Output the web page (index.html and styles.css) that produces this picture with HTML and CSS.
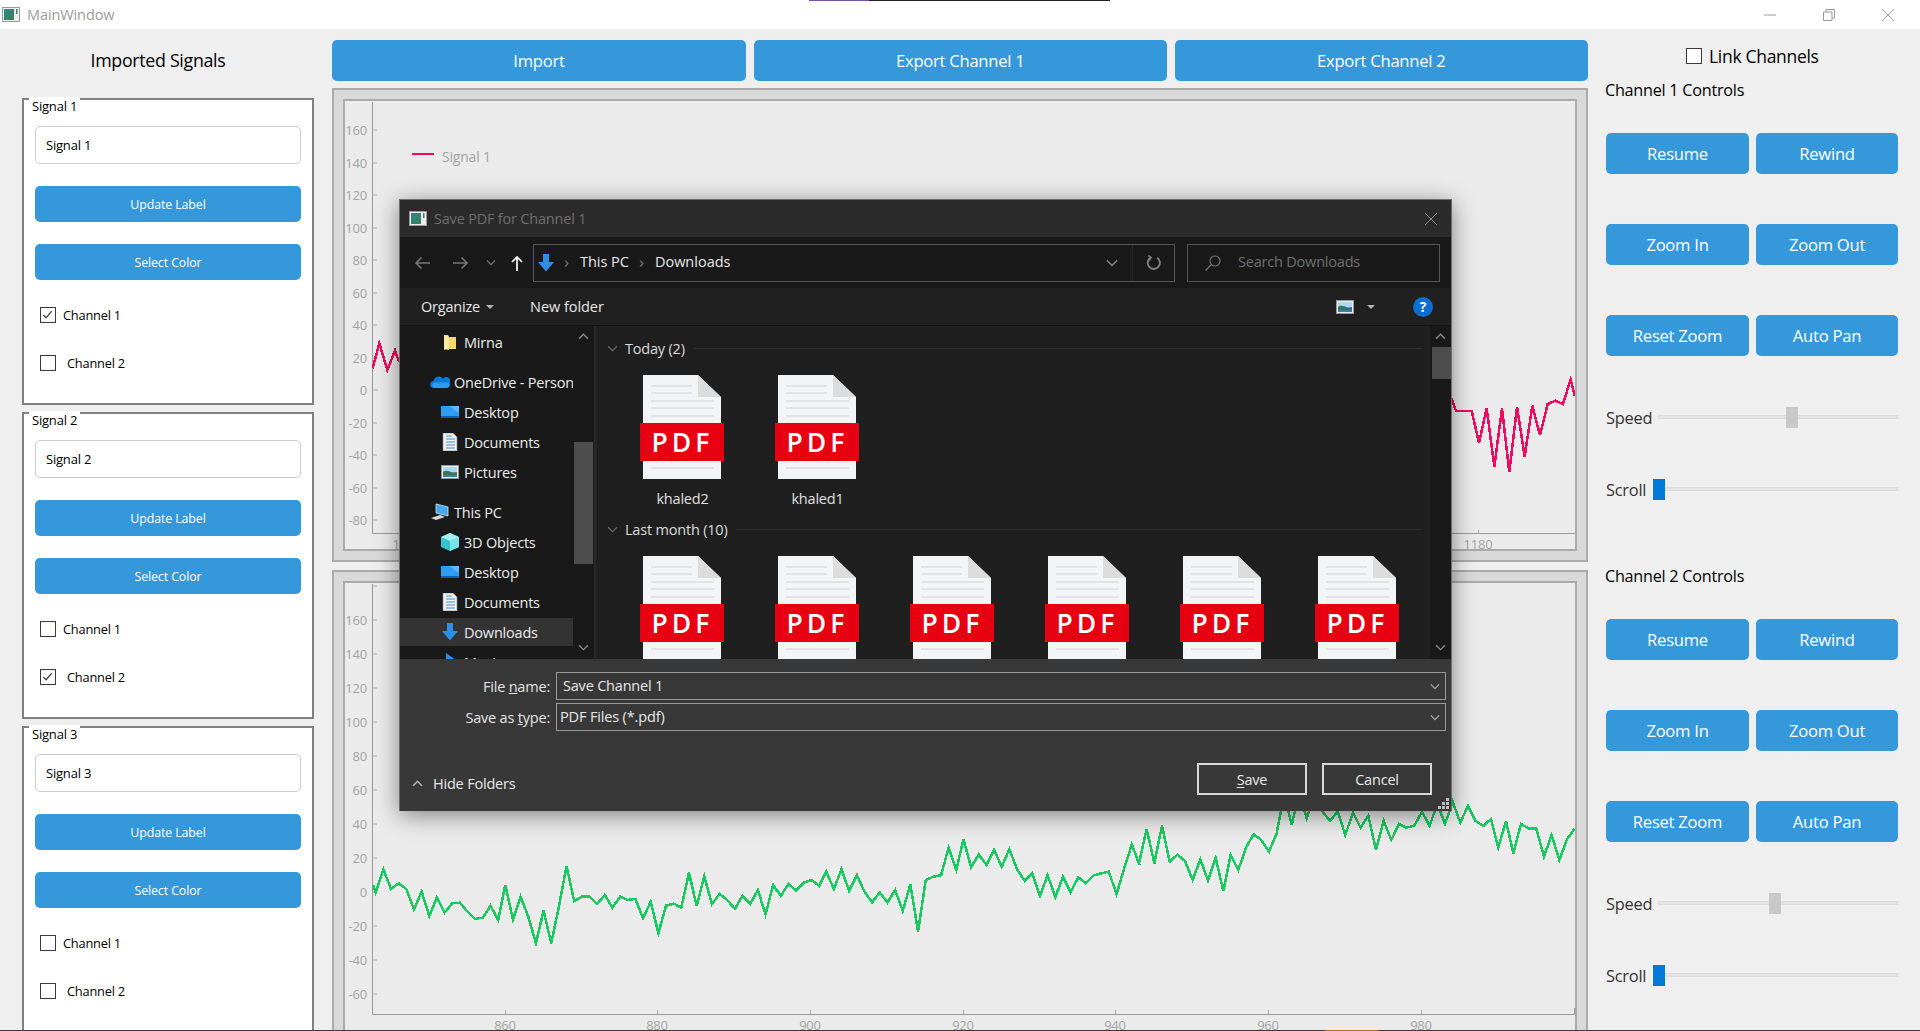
FILE: index.html
```html
<!DOCTYPE html>
<html lang="en">
<head>
<meta charset="utf-8">
<title>MainWindow</title>
<link rel="stylesheet" href="styles.css">
</head>
<body>
<svg class="defs" width="0" height="0" aria-hidden="true">
  <defs>
    <linearGradient id="appicon" x1="0" y1="0" x2="1" y2="1"><stop offset="0" stop-color="#2a8a96"/><stop offset="1" stop-color="#3f7f52"/></linearGradient>
    <symbol id="i-app" viewBox="0 0 18 15"><rect x=".5" y=".5" width="17" height="14" fill="#eee" stroke="#9a9a9a"/><rect x="2" y="2" width="10" height="11" fill="url(#appicon)"/><rect x="14" y="2" width="1.5" height="5" fill="#4a7a66"/></symbol>
    <symbol id="i-folder" viewBox="0 0 18 18"><path d="M3 2h4l1 2h7v12H5l-2 1z" fill="#f7d774"/><path d="M3 2l5 2v13l-5-1z" fill="#fbe9a6"/></symbol>
    <symbol id="i-cloud" viewBox="0 0 20 14"><path d="M4 13a3.500 3.500 0 0 1-.5-7A5.500 5.500 0 0 1 13 3.500 4 4 0 0 1 19.500 9 3.500 3.500 0 0 1 17 13z" fill="#0a78d4"/><path d="M4 13a3 3 0 0 1 0-5.500h11.500A3 3 0 0 1 19.800 10 3.500 3.500 0 0 1 17 13z" fill="#2f9bf0"/></symbol>
    <symbol id="i-desk" viewBox="0 0 18 14"><rect y="1" width="18" height="12" fill="#2f9df4"/><path d="M0 13V11h18v2z" fill="#0b62b8"/><path d="M8 1h10v7z" fill="#61b9fa"/></symbol>
    <symbol id="i-docs" viewBox="0 0 18 18"><path d="M2 0h10l4 4v14H2z" fill="#f2f2f2" stroke="#888" stroke-width=".7"/><path d="M5 3h6M5 6h9M5 9h9M5 12h9M5 15h9" stroke="#3d8edb" stroke-width="1.200"/></symbol>
    <symbol id="i-pics" viewBox="0 0 18 14"><rect x=".5" y=".5" width="17" height="13" fill="#eee" stroke="#999"/><rect x="2" y="2" width="14" height="10" fill="#a9dcf2"/><path d="M2 7c3-2 5-1 8 0s4 0 6 0v3H2z" fill="#41705c"/><rect x="2" y="10" width="14" height="2" fill="#2f84a8"/></symbol>
    <symbol id="i-pc" viewBox="0 0 20 18"><path d="M6 1l12 3v9L6 10z" fill="#47a8ee" stroke="#cfe6f8" stroke-width=".8"/><path d="M1 15l9-3 5 2-9 3z" fill="#d9d9d9"/></symbol>
    <symbol id="i-cube" viewBox="0 0 18 18"><path d="M9 0l9 4v10l-9 4-9-4V4z" fill="#37c3cf"/><path d="M9 8l9-4v10l-9 4z" fill="#79e3ea"/><path d="M9 8L0 4l9-4 9 4z" fill="#a6f0f3"/></symbol>
    <symbol id="i-dl" viewBox="0 0 16 18"><path d="M5 0h6v8h5l-8 9.500L0 8h5z" fill="#2f8fe8"/></symbol>
    <symbol id="i-music" viewBox="0 0 18 18"><path d="M5 0l10 7-10 7z" fill="#2f8fe8"/></symbol>
    <symbol id="i-chev" viewBox="0 0 12 8"><path d="M1 1.500l5 5 5-5" fill="none" stroke="currentColor" stroke-width="1.500"/></symbol>
    <symbol id="i-chevup" viewBox="0 0 12 8"><path d="M1 6.500l5-5 5 5" fill="none" stroke="currentColor" stroke-width="1.700"/></symbol>
    <symbol id="i-page" viewBox="0 0 84 104"><path d="M3 0h55l23 22v82H3z" fill="#f3f4f6"/><path d="M58 0l23 22H58z" fill="#dcdcdc"/><path d="M11 11h41M11 18h41M11 26h63M11 33h63M11 41h63M11 93h63" stroke="#cfd2d6" stroke-width="1"/></symbol>
  </defs>
</svg>

<div class="window">
  <div class="topline"></div>
  <header class="titlebar">
    <svg class="tb-icon"><use href="#i-app"/></svg>
    <span class="tb-title">MainWindow</span>
    <div class="tb-controls">
      <svg class="tb-btn" viewBox="0 0 12 12"><path d="M0 6h12" stroke="#999"/></svg>
      <svg class="tb-btn" viewBox="0 0 12 12"><path d="M.5 3h8.500v8.500H.5zM3 3V.5h8.500V9H9" fill="none" stroke="#999"/></svg>
      <svg class="tb-btn" viewBox="0 0 12 12"><path d="M0 0l12 12M12 0L0 12" stroke="#999"/></svg>
    </div>
  </header>

  <main class="main">
    <aside class="left">
      <h1 class="left-title">Imported Signals</h1>

      <section class="group">
        <span class="legend">Signal 1</span>
        <div class="field">Signal 1</div>
        <div class="btn btn-s">Update Label</div>
        <div class="btn btn-s">Select Color</div>
        <label class="chk chk-a"><span class="box on"><svg viewBox="0 0 14 14"><path d="M2.500 7.500l3 3 6-7" fill="none" stroke="#444" stroke-width="1.300"/></svg></span>Channel 1</label>
        <label class="chk chk-b"><span class="box"></span>Channel 2</label>
      </section>

      <section class="group">
        <span class="legend">Signal 2</span>
        <div class="field">Signal 2</div>
        <div class="btn btn-s">Update Label</div>
        <div class="btn btn-s">Select Color</div>
        <label class="chk chk-a"><span class="box"></span>Channel 1</label>
        <label class="chk chk-b"><span class="box on"><svg viewBox="0 0 14 14"><path d="M2.500 7.500l3 3 6-7" fill="none" stroke="#444" stroke-width="1.300"/></svg></span>Channel 2</label>
      </section>

      <section class="group">
        <span class="legend">Signal 3</span>
        <div class="field">Signal 3</div>
        <div class="btn btn-s">Update Label</div>
        <div class="btn btn-s">Select Color</div>
        <label class="chk chk-a"><span class="box"></span>Channel 1</label>
        <label class="chk chk-b"><span class="box"></span>Channel 2</label>
      </section>
    </aside>

    <div class="center">
      <div class="top-btns">
        <div class="btn btn-m">Import</div>
        <div class="btn btn-m">Export Channel 1</div>
        <div class="btn btn-m">Export Channel 2</div>
      </div>

      <div class="plot-outer">
        <div class="plot">
          <svg class="plot-svg" viewBox="345 101 1230 448">
            <path class="axis" d="M372.500 102V533.500H1575"/>
            <path class="tick" d="M372 130h5M372 163h5M372 195h5M372 228h5M372 260h5M372 293h5M372 325h5M372 358h5M372 390h6M372 423h5M372 455h5M372 488h5M372 520h5M1478.500 530v3"/>
            <g class="ylab">
              <text x="367" y="130">160</text><text x="367" y="163">140</text><text x="367" y="195">120</text><text x="367" y="228">100</text><text x="367" y="260">80</text><text x="367" y="293">60</text><text x="367" y="325">40</text><text x="367" y="358">20</text><text x="367" y="390">0</text><text x="367" y="423">-20</text><text x="367" y="455">-40</text><text x="367" y="488">-60</text><text x="367" y="520">-80</text>
            </g>
            <g class="xlab"><text x="407" y="544">1040</text><text x="1478" y="544">1180</text></g>
            <path class="leg-line" d="M412 154h22"/>
            <text class="leg-text" x="442" y="156">Signal 1</text>
            <polyline class="trace pink" transform="translate(330 80) scale(.3333)" points="128,865 148,790 172,870 195,812 207,845"/>
            <polyline class="trace pink" transform="translate(1440 0) scale(.3333 .3381)" points="20,1150 37,1185 48,1215 95,1215 117,1310 140,1208 163,1380 186,1208 208,1397 231,1203 254,1350 277,1200 300,1287 323,1195 346,1185 369,1195 392,1122 404,1170"/>
          </svg>
        </div>
      </div>

      <div class="plot-outer">
        <div class="plot">
          <svg class="plot-svg" viewBox="345 583 1230 448">
            <path class="axis" d="M372.500 584V1014.500H1574.500V1008"/>
            <path class="tick" d="M372 586h5M372 620h5M372 654h5M372 688h5M372 722h5M372 756h5M372 790h5M372 824h5M372 858h5M372 892h6M372 926h5M372 960h5M372 994h5M505.500 1010v4M657.500 1010v4M810.500 1010v4M963.500 1010v4M1115.500 1010v4M1268.500 1010v4M1421.500 1010v4"/>
            <g class="ylab">
              <text x="367" y="620">160</text><text x="367" y="654">140</text><text x="367" y="688">120</text><text x="367" y="722">100</text><text x="367" y="756">80</text><text x="367" y="790">60</text><text x="367" y="824">40</text><text x="367" y="858">20</text><text x="367" y="892">0</text><text x="367" y="926">-20</text><text x="367" y="960">-40</text><text x="367" y="994">-60</text>
            </g>
            <g class="xlab"><text x="505" y="1025">860</text><text x="657" y="1025">880</text><text x="810" y="1025">900</text><text x="963" y="1025">920</text><text x="1115" y="1025">940</text><text x="1268" y="1025">960</text><text x="1421" y="1025">980</text></g>
            <polyline class="trace green" transform="translate(340 800) scale(.5102 .3333)" points="65,255 70,277 85,208 100,267 115,250 130,267 145,328 160,275 175,348 190,292 205,338 220,310 235,308 250,335 265,357 280,353 295,317 310,360 324,255 339,358 354,290 369,350 384,430 399,332 414,430 429,320 444,198 459,303 474,290 489,290 504,312 519,285 534,323 549,290 564,300 579,297 594,355 609,305 624,400 639,317 654,311 669,323 684,218 699,318 714,229 729,312 744,282 759,300 774,327 789,287 804,312 819,270 834,343 849,255 864,288 879,252 894,272 909,248 924,240 939,257 953,215 968,267 983,208 998,273 1013,225 1028,275 1043,307 1058,277 1073,308 1088,270 1103,333 1118,253 1133,395 1148,240 1163,230 1178,226 1193,143 1208,210 1222,118 1237,202 1252,163 1267,195 1282,150 1297,200 1312,148 1327,208 1342,242 1357,220 1372,288 1387,225 1402,292 1417,230 1432,277 1447,232 1462,250 1477,226 1492,220 1507,215 1522,283 1537,205 1552,133 1567,195"/>
            <polyline class="trace green" transform="translate(1140 760) scale(.3333)" points="-3,310 20,207 43,310 66,197 89,305 112,284 135,303 158,360 181,298 204,362 227,294 250,393 272,285 295,330 318,262 341,223 364,240 387,275 410,220 433,100 455,195 478,100 500,175 523,110 548,155 570,183 593,155 616,225 639,157 662,203 685,167 708,270 731,182 754,240 777,192 800,203 823,197 846,155 869,198 892,130 915,192 938,125 961,188 984,137 1007,183 1030,198 1053,177 1075,263 1098,183 1120,280 1143,192 1166,205 1189,206 1212,290 1235,225 1258,300 1281,238 1304,206"/>
          </svg>
        </div>
      </div>
    </div>

    <aside class="right">
      <label class="link-row"><span class="box box-d"></span>Link Channels</label>

      <section class="ctrl">
        <h2 class="ctrl-title">Channel 1 Controls</h2>
        <div class="ctrl-grid">
          <div class="btn btn-m">Resume</div><div class="btn btn-m">Rewind</div>
          <div class="btn btn-m">Zoom In</div><div class="btn btn-m">Zoom Out</div>
          <div class="btn btn-m">Reset Zoom</div><div class="btn btn-m">Auto Pan</div>
        </div>
        <div class="slider-row first">
          <span class="sl-label speed">Speed</span>
          <div class="track"><span class="handle" style="left:127px"></span></div>
        </div>
        <div class="slider-row">
          <span class="sl-label scroll">Scroll</span>
          <div class="track"><span class="handle active" style="left:-1px"></span></div>
        </div>
      </section>

      <section class="ctrl">
        <h2 class="ctrl-title">Channel 2 Controls</h2>
        <div class="ctrl-grid">
          <div class="btn btn-m">Resume</div><div class="btn btn-m">Rewind</div>
          <div class="btn btn-m">Zoom In</div><div class="btn btn-m">Zoom Out</div>
          <div class="btn btn-m">Reset Zoom</div><div class="btn btn-m">Auto Pan</div>
        </div>
        <div class="slider-row first">
          <span class="sl-label speed">Speed</span>
          <div class="track"><span class="handle" style="left:110px"></span></div>
        </div>
        <div class="slider-row">
          <span class="sl-label scroll">Scroll</span>
          <div class="track"><span class="handle active" style="left:-1px"></span></div>
        </div>
      </section>
    </aside>
  </main>

  <div class="taskline"><span class="taskline-on"></span></div>

  <div class="dialog">
    <div class="d-title">
      <svg class="d-appicon"><use href="#i-app"/></svg>
      <span class="d-title-text">Save PDF for Channel 1</span>
      <svg class="d-close" viewBox="0 0 12 12"><path d="M0 0l12 12M12 0L0 12" stroke="#8a8a8a"/></svg>
    </div>

    <div class="d-addr">
      <div class="d-nav">
        <svg class="nb nb-back" viewBox="0 0 16 14"><path d="M16 7H2M7.500 1.500L2 7l5.500 5.500" fill="none" stroke="#777" stroke-width="1.600"/></svg>
        <svg class="nb nb-fwd" viewBox="0 0 16 14"><path d="M0 7h14M8.500 1.500L14 7l-5.500 5.500" fill="none" stroke="#777" stroke-width="1.600"/></svg>
        <svg class="nb-ch"><use href="#i-chev"/></svg>
        <svg class="nb-up" viewBox="0 0 12 16"><path d="M6 16V2M1 7l5-5 5 5" fill="none" stroke="#fff" stroke-width="1.700"/></svg>
      </div>
      <div class="addrbox">
        <svg class="crumb-icon"><use href="#i-dl"/></svg>
        <span class="crumb-sep">&#8250;</span>
        <span class="crumb">This PC</span>
        <span class="crumb-sep">&#8250;</span>
        <span class="crumb">Downloads</span>
        <svg class="addr-ch"><use href="#i-chev"/></svg>
        <span class="addr-div"></span>
        <svg class="addr-ref" viewBox="0 0 16 16"><path d="M5 2.800A6.500 6.500 0 1 0 12 3" fill="none" stroke="#808080" stroke-width="2"/><path d="M2.500 0.500l3 2.300-2.300 3" fill="none" stroke="#808080" stroke-width="1.600"/></svg>
      </div>
      <div class="searchbox">
        <svg class="s-icon" viewBox="0 0 16 16"><circle cx="10" cy="6" r="5" fill="none" stroke="#777" stroke-width="1.100"/><path d="M6.500 9.500L.5 15.500" stroke="#777" stroke-width="1.100"/></svg>
        <span class="s-text">Search Downloads</span>
      </div>
    </div>

    <div class="d-tools">
      <span class="tool org">Organize</span><span class="caret"></span>
      <span class="tool newf">New folder</span>
      <svg class="view-ic"><use href="#i-pics"/></svg>
      <span class="caret caret-v"></span>
      <span class="help">?</span>
    </div>

    <div class="d-body">
      <nav class="d-navpane">
        <div class="navlist">
          <div class="nrow l2"><svg class="nic"><use href="#i-folder"/></svg>Mirna</div>
          <div class="nrow l1 gap"><svg class="nic"><use href="#i-cloud"/></svg>OneDrive - Person</div>
          <div class="nrow l2"><svg class="nic"><use href="#i-desk"/></svg>Desktop</div>
          <div class="nrow l2"><svg class="nic"><use href="#i-docs"/></svg>Documents</div>
          <div class="nrow l2"><svg class="nic"><use href="#i-pics"/></svg>Pictures</div>
          <div class="nrow l1 gap"><svg class="nic"><use href="#i-pc"/></svg>This PC</div>
          <div class="nrow l2"><svg class="nic"><use href="#i-cube"/></svg>3D Objects</div>
          <div class="nrow l2"><svg class="nic"><use href="#i-desk"/></svg>Desktop</div>
          <div class="nrow l2"><svg class="nic"><use href="#i-docs"/></svg>Documents</div>
          <div class="nrow l2 sel"><svg class="nic"><use href="#i-dl"/></svg>Downloads</div>
          <div class="nrow l2"><svg class="nic"><use href="#i-music"/></svg>Music</div>
        </div>
        <div class="vscroll">
          <svg class="sc-arrow up"><use href="#i-chevup"/></svg>
          <span class="thumb thumb-nav"></span>
          <svg class="sc-arrow down"><use href="#i-chev"/></svg>
        </div>
      </nav>

      <div class="d-files">
        <div class="sec-head"><svg class="sec-ch"><use href="#i-chev"/></svg><span class="sec-name">Today (2)</span><span class="sec-line"></span></div>
        <div class="tiles">
          <div class="tile"><div class="doc"><svg class="page"><use href="#i-page"/></svg><span class="band">PDF</span></div><span class="fname">khaled2</span></div>
          <div class="tile"><div class="doc"><svg class="page"><use href="#i-page"/></svg><span class="band">PDF</span></div><span class="fname">khaled1</span></div>
        </div>
        <div class="sec-head"><svg class="sec-ch"><use href="#i-chev"/></svg><span class="sec-name">Last month (10)</span><span class="sec-line"></span></div>
        <div class="tiles">
          <div class="tile"><div class="doc"><svg class="page"><use href="#i-page"/></svg><span class="band">PDF</span></div></div>
          <div class="tile"><div class="doc"><svg class="page"><use href="#i-page"/></svg><span class="band">PDF</span></div></div>
          <div class="tile"><div class="doc"><svg class="page"><use href="#i-page"/></svg><span class="band">PDF</span></div></div>
          <div class="tile"><div class="doc"><svg class="page"><use href="#i-page"/></svg><span class="band">PDF</span></div></div>
          <div class="tile"><div class="doc"><svg class="page"><use href="#i-page"/></svg><span class="band">PDF</span></div></div>
          <div class="tile"><div class="doc"><svg class="page"><use href="#i-page"/></svg><span class="band">PDF</span></div></div>
        </div>
      </div>

      <div class="vscroll vscroll-r">
        <svg class="sc-arrow up"><use href="#i-chevup"/></svg>
        <span class="thumb thumb-files"></span>
        <svg class="sc-arrow down"><use href="#i-chev"/></svg>
      </div>
    </div>

    <div class="d-foot">
      <div class="frow">
        <span class="flabel">File <u>n</u>ame:</span>
        <div class="finput pad-a">Save Channel 1<svg class="f-ch"><use href="#i-chev"/></svg></div>
      </div>
      <div class="frow frow-2">
        <span class="flabel">Save as <u>t</u>ype:</span>
        <div class="finput pad-b">PDF Files (*.pdf)<svg class="f-ch"><use href="#i-chev"/></svg></div>
      </div>
      <div class="fbtns">
        <div class="hide"><svg class="hide-ch"><use href="#i-chevup"/></svg>Hide Folders</div>
        <div class="dbtn dbtn-first"><u>S</u>ave</div>
        <div class="dbtn">Cancel</div>
      </div>
      <svg class="grip" viewBox="0 0 11 11"><path d="M8 0h3v3H8zM4 4h3v3H4zM8 4h3v3H8zM0 8h3v3H0zM4 8h3v3H4zM8 8h3v3H8z" fill="#bdbdbd"/></svg>
    </div>
  </div>
</div>
</body>
</html>
```
FILE: styles.css
```css
* { box-sizing: border-box; }
html, body { margin: 0; padding: 0; height: 100%; overflow: hidden; }
body { font-family: "Open Sans", "Noto Sans", sans-serif; color: #000; }
.defs { position: absolute; }

.window { position: relative; width: 1920px; height: 1031px; overflow: hidden; background: #efefef; display: flex; flex-direction: column; }
.topline { position: absolute; top: 0; left: 809px; width: 301px; height: 1px; background: linear-gradient(90deg, #7a4fa8 0 60px, #222 60px); }
.taskline { position: absolute; left: 0; right: 0; bottom: 0; height: 1px; background: #3a3a3a; }
.taskline-on { position: absolute; left: 1325px; width: 53px; height: 1px; background: #c8661a; }

/* title bar */
.titlebar { height: 29px; flex: none; background: #fff; display: flex; align-items: center; }
.tb-icon { width: 18px; height: 15px; margin-left: 2px; }
.tb-title { margin-left: 7px; font-size: 14.500px; letter-spacing: -.1px; color: #9c9c9c; }
.tb-controls { margin-left: auto; display: flex; gap: 47px; padding-right: 26px; }
.tb-btn { width: 12px; height: 12px; display: block; }

.main { flex: 1; display: flex; min-height: 0; }

/* left */
.left { width: 332px; flex: none; padding: 0 18px 0 22px; }
.left-title { margin: 20px 0 27px; height: 22px; line-height: 22px; font-size: 17.800px; font-weight: 400; letter-spacing: -.3px; text-align: center; width: 272px; }
.group { position: relative; height: 307px; margin-bottom: 7px; background: #fff; border: 2px solid #808080; padding: 26px 11px 0; display: flex; flex-direction: column; }
.legend { position: absolute; top: -3px; left: 5px; padding: 0 3px; height: 19px; line-height: 18px; background: #fff; font-size: 13px; letter-spacing: -.2px; }
.field { height: 38px; border: 1px solid #ccc; border-radius: 5px; line-height: 37px; padding-left: 10px; font-size: 13px; letter-spacing: -.2px; margin-bottom: 22px; background: #fff; }
.btn { display: flex; align-items: center; justify-content: center; background: #3498db; color: #fff; border-radius: 5px; }
.btn-s { height: 36px; margin-bottom: 22px; font-size: 12.400px; letter-spacing: -.1px; }
.btn-s + .btn-s { margin-bottom: 27px; }
.chk { display: flex; align-items: center; height: 16px; margin-left: 5px; font-size: 12.800px; letter-spacing: -.2px; }
.chk-a .box { margin-right: 7px; }
.chk-b { margin-top: 32px; }
.chk-b .box { margin-right: 11px; }
.box { width: 16px; height: 16px; flex: none; border: 1.500px solid #3a3a3a; background: #fff; display: block; }
.box svg { display: block; width: 13px; height: 13px; }

/* center */
.center { width: 1256px; flex: none; padding-top: 11px; }
.top-btns { display: grid; grid-template-columns: 414px 413.500px 413.500px; column-gap: 7.500px; height: 41px; margin-bottom: 7px; }
.btn-m { font-size: 16.600px; letter-spacing: -.25px; height: 41px; }
.plot-outer { height: 474px; margin-bottom: 8px; border: 2px solid #aaa; background: #d9d9d9; padding: 9px; }
.plot { height: 452px; border: 2px solid #aaa; background: #ebebeb; }
.plot-svg { display: block; width: 100%; height: 100%; }
.axis { fill: none; stroke: #9a9a9a; stroke-width: 1; }
.tick { fill: none; stroke: #a8a8a8; stroke-width: 1; }
.ylab text { text-anchor: end; dominant-baseline: central; font-size: 13px; fill: #a3a3a3; letter-spacing: -.2px; }
.xlab text { text-anchor: middle; dominant-baseline: central; font-size: 13px; fill: #a3a3a3; letter-spacing: -.2px; }
.leg-line { stroke: #ee0a5f; stroke-width: 2; }
.leg-text { font-size: 14px; fill: #a3a3a3; letter-spacing: -.2px; dominant-baseline: central; }
.trace { fill: none; stroke-width: 2.500; vector-effect: non-scaling-stroke; shape-rendering: crispEdges; }
.pink { stroke: #ee0a5f; }
.green { stroke: #19c85e; }

/* right */
.right { flex: 1; padding: 16px 22px 0 18px; min-width: 0; }
.link-row { height: 22px; display: flex; align-items: center; margin: 0 0 12px 80px; font-size: 17.500px; letter-spacing: -.3px; }
.box-d { margin-right: 7px; }
.ctrl { height: 486px; }
.ctrl-title { margin: 0 0 32px -1px; height: 22px; line-height: 22px; font-size: 16.200px; font-weight: 400; letter-spacing: -.25px; }
.ctrl-grid { display: grid; grid-template-columns: 143px 142px; column-gap: 7px; row-gap: 50px; }
.slider-row { display: flex; align-items: center; height: 21px; margin-top: 51px; color: #333; font-size: 16.400px; letter-spacing: -.25px; }
.slider-row.first { margin-top: 50px; }
.sl-label { flex: none; position: relative; top: 1px; }
.speed { width: 52px; }
.scroll { width: 47px; }
.track { position: relative; flex: 1; height: 4px; background: #e4e4e4; border: 1px solid #dcdcdc; }
.handle { position: absolute; top: -9px; width: 12px; height: 21px; background: #c8c8c8; }
.handle.active { background: #0078d7; }

/* dialog */
.dialog { position: absolute; left: 399px; top: 199px; width: 1053px; height: 612px; background: #191919; border: 1px solid #6d6d6d; border-bottom: 0; box-shadow: 0 4px 22px rgba(0,0,0,.45); display: flex; flex-direction: column; color: #e8e8e8; font-size: 14.500px; letter-spacing: -.2px; }
.d-title { height: 37px; flex: none; background: #2b2b2b; display: flex; align-items: center; }
.d-appicon { width: 18px; height: 15px; margin-left: 9px; }
.d-title-text { margin-left: 7px; color: #6e6e6e; }
.d-close { width: 12px; height: 12px; margin-left: auto; margin-right: 14px; }

.d-addr { height: 51px; flex: none; background: #191919; display: flex; align-items: center; }
.d-nav { width: 133px; flex: none; display: flex; align-items: center; }
.nb { width: 16px; height: 14px; }
.nb-back { margin-left: 14px; }
.nb-fwd { margin-left: 23px; }
.nb-ch { width: 10px; height: 7px; margin-left: 17px; color: #777; }
.nb-up { width: 12px; height: 16px; margin-left: 15px; }
.addrbox { width: 642px; height: 38px; border: 1px solid #565656; display: flex; align-items: center; }
.crumb-icon { width: 16px; height: 18px; margin-left: 4px; }
.crumb-sep { color: #777; font-size: 17px; margin: 0 11px 3px 10px; line-height: 1; }
.crumb { color: #e8e8e8; letter-spacing: 0; position: relative; top: -1px; }
.addr-ch { width: 12px; height: 8px; margin-left: auto; color: #8a8a8a; }
.addr-div { width: 1px; height: 36px; background: #2a2a2a; margin-left: 14px; }
.addr-ref { width: 15px; height: 15px; margin: 0 13px 0 13px; }
.searchbox { width: 253px; height: 38px; margin-left: 12px; border: 1px solid #565656; display: flex; align-items: center; color: #707070; }
.s-text { position: relative; top: -1px; }
.s-icon { width: 16px; height: 16px; margin: 0 17px 0 17px; }

.d-tools { height: 38px; flex: none; background: #202020; border-bottom: 1px solid #141414; display: flex; align-items: center; }
.org { margin-left: 21px; }
.caret { width: 0; height: 0; border-left: 4px solid transparent; border-right: 4px solid transparent; border-top: 4px solid #b5b5b5; margin-left: 6px; }
.newf { margin-left: 36px; letter-spacing: -.05px; }
.view-ic { width: 18px; height: 14px; margin-left: auto; }
.caret-v { margin-left: 13px; }
.help { width: 20px; height: 20px; border-radius: 50%; background: #0a6dd0; color: #fff; font-weight: 700; font-size: 14px; line-height: 20px; text-align: center; margin: 0 18px 0 38px; }

.d-body { height: 333px; flex: none; display: flex; }
.d-navpane { width: 196px; flex: none; display: flex; background: #191919; border-right: 2px solid #2a2a2a; }
.navlist { width: 173px; flex: none; overflow: hidden; height: 333px; padding-top: 2px; }
.nrow { height: 28px; margin: 0 0 2px; display: flex; align-items: center; white-space: nowrap; color: #ececec; }
.nrow.gap { margin-top: 12px; }
.nrow.l2 { padding-left: 41px; }
.nrow.l1 { padding-left: 30px; }
.nrow.sel { background: #333; }
.nic { width: 18px; height: 18px; flex: none; margin-right: 5px; }
.l1 .nic { width: 20px; margin-right: 4px; }

.vscroll { position: relative; width: 21px; flex: none; background: #191919; }
.vscroll-r { width: 21px; }
.vscroll-r .thumb { left: 2px; }
.sc-arrow { position: absolute; left: 5px; width: 11px; height: 7px; color: #8a8a8a; }
.sc-arrow.up { top: 7px; }
.sc-arrow.down { bottom: 8px; }
.thumb { position: absolute; left: 1px; width: 19px; background: #4d4d4d; }
.thumb-nav { top: 116px; height: 122px; }
.thumb-files { top: 21px; height: 32px; }

.d-files { flex: 1; min-width: 0; background: #1f1f1f; padding: 11px 8px 0 11px; overflow: hidden; }
.sec-head { height: 22px; display: flex; align-items: center; }
.sec-ch { width: 11px; height: 7px; color: #666; flex: none; margin-right: 7px; }
.sec-name { color: #dcdcdc; }
.sec-line { flex: 1; height: 1px; background: #2d2d2d; margin-left: 9px; }
.tiles { display: flex; margin: 16px 0 9px 7px; }
.tile { width: 135px; flex: none; display: flex; flex-direction: column; align-items: center; }
.doc { position: relative; width: 84px; height: 104px; }
.page { display: block; width: 84px; height: 104px; }
.band { position: absolute; left: 0; top: 48px; width: 84px; height: 38px; padding-left: 2px; background: #e60012; color: #fff; font-size: 26.500px; font-weight: 600; letter-spacing: 4px; text-align: center; line-height: 38px; }
.fname { margin: 10px 0 0 2px; line-height: 20px; color: #e0e0e0; }

.d-foot { position: relative; flex: 1; background: #383838; padding-top: 13px; }
.frow { display: flex; height: 28px; }
.frow-2 { margin-top: 3px; }
.flabel { width: 150px; flex: none; text-align: right; line-height: 29px; color: #e4e4e4; }
.finput { position: relative; width: 890px; margin-left: 6px; height: 28px; border: 1px solid #999; line-height: 25px; color: #e8e8e8; }
.pad-a { padding-left: 6px; }
.pad-b { padding-left: 3px; letter-spacing: -.15px; }
.f-ch { position: absolute; right: 5px; top: 10px; width: 10px; height: 7px; color: #aaa; }
.fbtns { display: flex; align-items: center; margin-top: 32px; height: 32px; }
.hide { display: flex; align-items: center; margin: 8px auto 0 12px; }
.hide-ch { width: 11px; height: 7px; margin-right: 10px; color: #bbb; }
.dbtn { width: 110px; height: 32px; border: 2px solid #d8d8d8; display: flex; align-items: center; justify-content: center; margin-right: 19px; }
.dbtn-first { margin-right: 15px; }
.dbtn u { text-underline-offset: 2px; }
.grip { position: absolute; right: 2px; bottom: 2px; width: 11px; height: 11px; }
```
